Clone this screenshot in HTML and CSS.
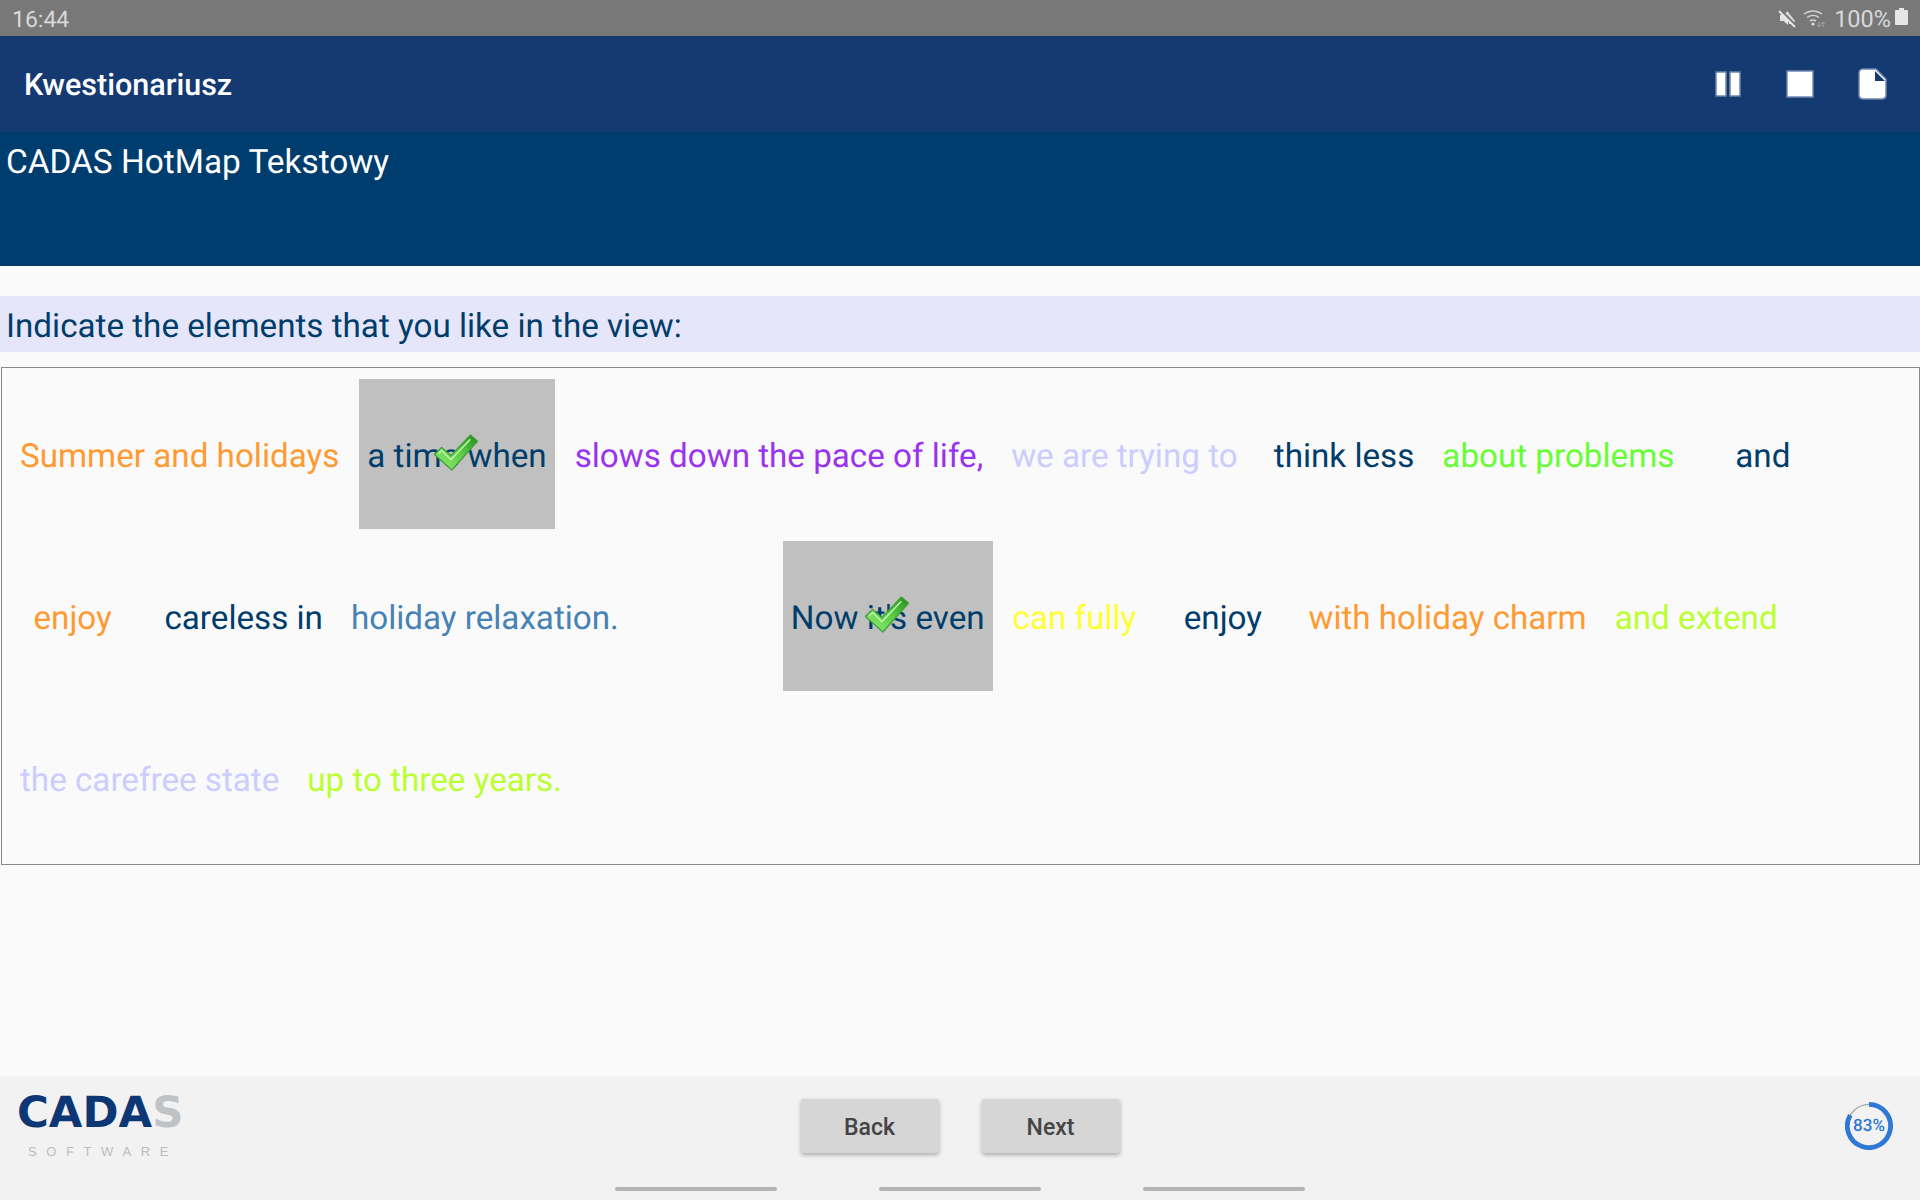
FILE: index.html
```html
<!DOCTYPE html>
<html lang="pl">
<head>
<meta charset="utf-8">
<title>Kwestionariusz</title>
<link rel="stylesheet" href="styles.css">
</head>
<body>
<svg class="defs" width="0" height="0" aria-hidden="true">
  <defs>
    <linearGradient id="chk" x1="0" y1="1" x2="1" y2="0">
      <stop offset="0" stop-color="#93ee76"/>
      <stop offset=".55" stop-color="#5ccc45"/>
      <stop offset="1" stop-color="#1f8a1c"/>
    </linearGradient>
    <symbol id="check" viewBox="0 0 44 36">
      <path d="M1 20 L8 13 L17 21 L36 1 L43 7 L18 35 Z" fill="url(#chk)" stroke="#3f9f38" stroke-width="1.2" stroke-linejoin="round"/>
      <path d="M5 19 L8 16 L17 25 L36 5" fill="none" stroke="#c4f7ae" stroke-width="1.4"/>
    </symbol>
  </defs>
</svg>
<div class="page">
  <header class="status">
    <span class="clock">16:44</span>
    <div class="status-right">
      <svg class="st-mute" viewBox="0 0 20 20"><path d="M2 7h3.500L10 3v14l-4.500-4H2z M10 4l7 9-2 3H11z" fill="#e2e2e2"/><path d="M2 2l16 16" stroke="#787878" stroke-width="3"/><path d="M1 3l16 16" stroke="#e8e8e8" stroke-width="1.800"/></svg>
      <svg class="st-wifi" viewBox="0 0 24 20"><path d="M1 6a15 15 0 0 1 18 0M4 9.500a10 10 0 0 1 12 0M7 13a5.500 5.500 0 0 1 6 0" fill="none" stroke="#d4d4d4" stroke-width="1.500"/><circle cx="10" cy="16" r="1.500" fill="#e4e4e4"/><path d="M16 14v5M14.500 17l1.500 2 1.500-2M20 19v-5M18.500 16l1.500-2 1.500 2" fill="none" stroke="#a8a8a8" stroke-width="1"/></svg>
      <span class="battery-text">100%</span>
      <svg class="st-batt" viewBox="0 0 13 17"><path d="M4 0h5v2h3a1 1 0 0 1 1 1v13a1 1 0 0 1-1 1H1a1 1 0 0 1-1-1V3a1 1 0 0 1 1-1h3z" fill="#e6e6e6"/></svg>
    </div>
  </header>
  <div class="appbar">
    <h1 class="app-title">Kwestionariusz</h1>
    <div class="app-actions">
      <svg class="act" viewBox="0 0 30 30"><path d="M3 3h10v24H3zM17 3h10v24H17z" fill="#fff" stroke="#6d86ad" stroke-width="1.500"/></svg>
      <svg class="act" viewBox="0 0 30 30"><path d="M2 2h26v26H2z" fill="#fff" stroke="#6d86ad" stroke-width="1.500"/></svg>
      <svg class="act" viewBox="0 0 30 30"><path d="M6 0h13l10 10v17a4 4 0 0 1-4 3H6a4 4 0 0 1-4-3V4a4 4 0 0 1 4-4z" fill="#fff" stroke="#6d86ad" stroke-width="1.500"/><path d="M18 2v10h10z" fill="#153a72"/></svg>
    </div>
  </div>
  <div class="survey-title">CADAS HotMap Tekstowy</div>
  <main class="content">
    <div class="prompt">Indicate the elements that you like in the view:</div>
    <div class="hotmap">
      <div class="row">
        <span class="word orange">Summer and holidays</span>
        <span class="word navy selected">a time when<svg class="tick"><use href="#check"/></svg></span>
        <span class="word purple">slows down the pace of life,</span>
        <span class="word lav">we are trying to </span>
        <span class="word navy">think less</span>
        <span class="word green">about problems    </span>
        <span class="word navy">and</span>
      </div>
      <div class="row row-indented">
        <span class="word orange">  enjoy   </span>
        <span class="word navy">careless in</span>
        <span class="word steel wide-after">holiday relaxation.</span>
        <span class="word navy selected">Now it's even<svg class="tick"><use href="#check"/></svg></span>
        <span class="word yellow gap-md">can fully  </span>
        <span class="word navy gap-sm">enjoy  </span>
        <span class="word orange">with holiday charm</span>
        <span class="word lime">and extend</span>
      </div>
      <div class="row">
        <span class="word lav">the carefree state</span>
        <span class="word lime">up to three years.</span>
      </div>
    </div>
  </main>
  <footer class="footer">
    <div class="footer-main">
      <div class="logo">
        <div class="logo-name">CADA<span class="logo-s">S</span></div>
        <div class="logo-sub">SOFTWARE</div>
      </div>
      <div class="buttons">
        <button class="btn">Back</button>
        <button class="btn">Next</button>
      </div>
      <div class="progress">
        <svg class="ring" viewBox="0 0 50 50">
          <circle cx="25" cy="25" r="22.500" fill="none" stroke="#a9a9a9" stroke-width="1.500"/>
          <path d="M25 2.500A22.500 22.500 0 1 1 5.500 13.700" fill="none" stroke="#2f78d6" stroke-width="5"/>
        </svg>
        <span class="pct">83%</span>
      </div>
    </div>
    <div class="navhints"><i></i><i></i><i></i></div>
  </footer>
</div>
</body>
</html>
```
FILE: styles.css
```css
* { box-sizing: border-box; }
html, body { margin: 0; padding: 0; }
body { font-family: Roboto, "Liberation Sans", sans-serif; background: #fafafa; text-rendering: geometricPrecision; }
.defs { position: absolute; }
.page { width: 1920px; height: 1200px; display: flex; flex-direction: column; overflow: hidden; }

.status { height: 36px; flex: none; background: #787878; color: #d8d8d8; display: flex; align-items: center; justify-content: space-between; padding: 0 12px 0 12px; font-size: 23px; }
.clock { position: relative; top: 1px; }
.status-right { display: flex; align-items: center; }
.st-mute { width: 20px; height: 20px; margin-right: 4px; }
.st-wifi { width: 26px; height: 20px; margin-right: 6px; }
.battery-text { position: relative; top: 1px; margin-right: 4px; font-size: 23.500px; }
.st-batt { width: 13px; height: 17px; position: relative; top: -2px; }

.appbar { height: 96px; flex: none; background: #153a72; display: flex; align-items: center; justify-content: space-between; padding: 0 33px 0 24px; }
.app-title { margin: 0; color: #fff; font-size: 30.500px; font-weight: 500; position: relative; top: 1px; }
.app-actions { display: flex; gap: 42px; }
.act { width: 30px; height: 32px; display: block; }

.survey-title { height: 134px; flex: none; background: #003d6f; color: #fff; font-size: 33.400px; line-height: 40px; padding: 11px 0 0 6px; }

.content { flex: 1; padding-top: 30px; min-height: 0; }
.prompt { height: 56px; background: #e6e6fa; color: #003d6b; font-size: 33.200px; line-height: 62px; padding-left: 6px; }
.hotmap { margin: 15px 0 0 1px; height: 498px; border: 1px solid #8a8a8a; padding: 5px 0 0 0; }
.row { display: flex; height: 162px; align-items: center; }
.word { position: relative; display: flex; align-items: center; height: 150px; margin: 0 6px; padding: 4px 8px 0; font-size: 33.200px; white-space: pre; }
.word:first-child { margin-left: 10px; }
.row-indented .word:first-child { margin-left: 7px; }
.selected { background: #c0c0c0; }
.wide-after { margin-right: 150px; }
.gap-md { margin-right: 9px; }
.gap-sm { margin-right: 8px; }
.tick { position: absolute; left: 50%; top: 50%; width: 46px; height: 37px; margin: -20px 0 0 -24px; }
.orange { color: #ff9a33; }
.navy { color: #003d6b; }
.purple { color: #9a33ee; }
.lav { color: #ccccff; }
.green { color: #66ff33; }
.steel { color: #4682b4; }
.yellow { color: #ffff33; }
.lime { color: #bbff33; }

.footer { height: 124px; flex: none; background: #f2f2f2; display: flex; flex-direction: column; }
.footer-main { flex: 1; display: grid; grid-template-columns: 1fr auto 1fr; align-items: start; }
.logo { padding: 15px 0 0 17px; }
.logo-name { font-family: "DejaVu Sans", sans-serif; font-weight: 700; font-size: 43px; line-height: 44px; color: #0d3675; transform: scaleX(1.010); transform-origin: left; }
.logo-s { color: #c0c3c6; }
.logo-sub { margin: 9px 0 0 11px; font-family: "Liberation Sans", sans-serif; font-size: 13px; line-height: 16px; letter-spacing: 9.600px; color: #bcbcbc; }
.buttons { display: flex; gap: 43px; padding-top: 23px; }
.btn { width: 138px; height: 54px; border: 0; border-radius: 3px; background: #d6d6d6; color: #444; font: 500 23px Roboto, sans-serif; padding-top: 3px; box-shadow: 0 2px 4px rgba(0,0,0,.3); }
.progress { position: relative; justify-self: end; width: 48px; height: 48px; margin: 26px 27px 0 0; display: flex; align-items: center; justify-content: center; }
.ring { position: absolute; inset: 0; }
.pct { position: relative; color: #2f78d6; font-size: 17px; font-weight: 500; }
.navhints { height: 14px; flex: none; display: flex; justify-content: center; gap: 102px; padding-top: 1px; }
.navhints i { width: 162px; height: 4px; border-radius: 2px; background: #b4b4b4; }
```
